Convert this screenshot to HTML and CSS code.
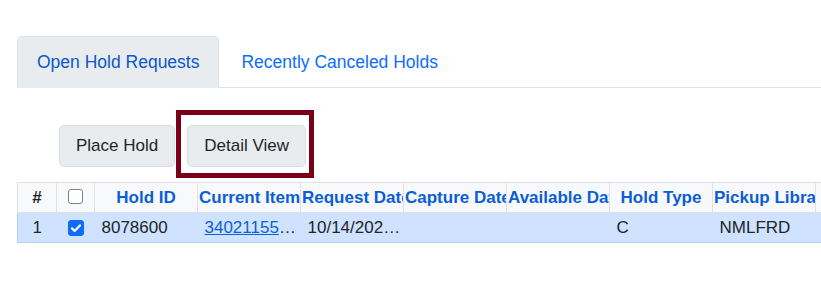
FILE: index.html
```html
<!DOCTYPE html>
<html>
<head>
<meta charset="utf-8">
<link rel="stylesheet" href="styles.css">
</head>
<body>
<div class="page">
  <ul class="tabs">
    <li class="tab active">Open Hold Requests</li>
    <li class="tab">Recently Canceled Holds</li>
  </ul>
  <div class="actions">
    <button class="btn">Place Hold</button>
    <button class="btn">Detail View</button>
    <div class="highlight"></div>
  </div>
  <table class="grid">
    <colgroup>
      <col class="c-num"><col class="c-cb"><col class="c-w"><col class="c-w"><col class="c-w"><col class="c-w"><col class="c-w"><col class="c-w"><col class="c-w"><col class="c-w">
    </colgroup>
    <thead>
      <tr>
        <th class="dark">#</th>
        <th><span class="cb"></span></th>
        <th>Hold ID</th>
        <th>Current Item</th>
        <th>Request Date</th>
        <th>Capture Date</th>
        <th>Available Date</th>
        <th>Hold Type</th>
        <th>Pickup Library</th>
        <th>Title</th>
      </tr>
    </thead>
    <tbody>
      <tr class="selected">
        <td class="center">1</td>
        <td class="center"><span class="cb checked"><svg viewBox="0 0 16 16" width="16" height="16"><path d="M4 8.4l2.6 2.6L12 5.4" fill="none" stroke="#fff" stroke-width="2.2" stroke-linecap="round" stroke-linejoin="round"/></svg></span></td>
        <td>8078600</td>
        <td><a href="#" class="link">34021155012345</a></td>
        <td>10/14/2024 10:15 AM</td>
        <td></td>
        <td></td>
        <td>C</td>
        <td>NMLFRD</td>
        <td></td>
      </tr>
    </tbody>
  </table>
</div>
</body>
</html>
```

FILE: styles.css
```css
html, body {
  margin: 0;
  padding: 0;
  overflow: hidden;
  background: #fff;
}

body {
  font-family: "Liberation Sans", Arial, sans-serif;
  font-size: 17.5px;
  color: #212529;
}

.page {
  padding: 36px 0 0 17px;
  width: 1100px;
}

.tabs {
  list-style: none;
  margin: 0;
  padding: 0;
  display: flex;
  border-bottom: 1px solid #dee2e6;
  height: 51px;
}

.tab {
  height: 51px;
  line-height: 50px;
  padding: 0 21px;
  color: #0d6efd;
  box-sizing: border-box;
  border: 1px solid transparent;
  border-top-left-radius: 5px;
  border-top-right-radius: 5px;
}

.tab.active {
  padding: 0 19px;
  background: #e9ecef;
  border-color: #dee2e6 #dee2e6 #e9ecef;
  color: #0a58ca;
  height: 52px;
  margin-bottom: -1px;
}

.actions {
  position: relative;
  display: flex;
  gap: 12px;
  padding: 37px 0 0 42px;
  margin-bottom: 15px;
}

.btn {
  font-family: inherit;
  font-size: 17px;
  color: #212529;
  background: #e9ecef;
  border: 1px solid #d9dde1;
  border-radius: 5px;
  height: 42px;
  padding: 0 16px;
  cursor: pointer;
}

.highlight {
  position: absolute;
  left: 159px;
  top: 22px;
  width: 128px;
  height: 58px;
  border: 5px solid #7a0019;
}

.grid {
  border-collapse: collapse;
  table-layout: fixed;
  width: 901px;
  font-size: 17px;
}

.c-num { width: 39px; }
.c-cb { width: 38px; }
.c-w { width: 103px; }

.grid th {
  height: 30px;
  padding: 0 1px;
  background: #f8f9fa;
  border: 1px solid #dee2e6;
  color: #0b5ed7;
  font-weight: bold;
  text-align: center;
  white-space: nowrap;
  overflow: hidden;
  box-sizing: border-box;
}

.grid th.dark {
  color: #212529;
}

.grid td {
  height: 30px;
  padding: 0 2px 0 7px;
  white-space: nowrap;
  overflow: hidden;
  text-overflow: ellipsis;
  box-sizing: border-box;
}

.grid td.center {
  text-align: center;
  padding: 0;
}

.selected td {
  background: #cfe2ff;
  border-top: 1px solid #b6cff3;
  border-bottom: 1px solid #b6cff3;
}

.selected td:first-child {
  border-left: 1px solid #b6cff3;
}

.link {
  color: #0d5fd6;
  text-decoration: underline;
}

.cb {
  display: inline-block;
  width: 15px;
  height: 15px;
  border: 1px solid #7b8085;
  border-radius: 3px;
  background: #fff;
  vertical-align: middle;
  position: relative;
  top: -2px;
  box-sizing: border-box;
}

.cb.checked {
  width: 16px;
  height: 16px;
  background: #0d6efd;
  border-color: #0d6efd;
  top: 0;
}

.cb.checked svg {
  display: block;
  margin: -1px;
}
```
